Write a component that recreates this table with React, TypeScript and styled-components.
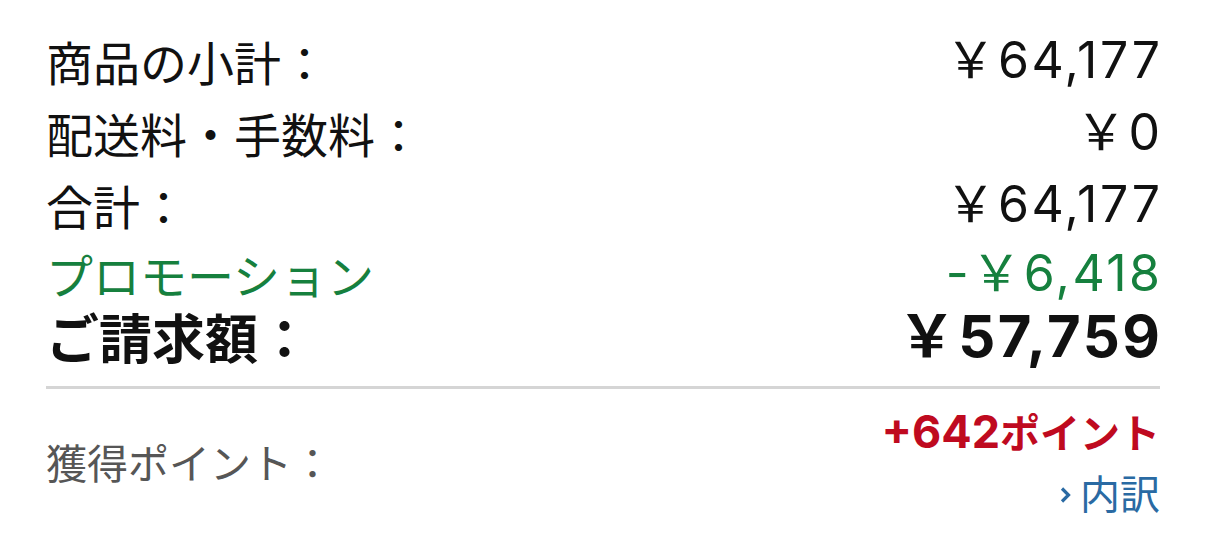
import styled, { createGlobalStyle } from "styled-components";

const GlobalStyle = createGlobalStyle`
  html, body {
    margin: 0;
    padding: 0;
    background: #ffffff;
  }
  body {
    font-family: "Noto Sans CJK JP", "Noto Sans", sans-serif;
    color: #111111;
  }
`;

const Summary = styled.section`
  padding: 24px 46px 0 46px;
  width: 1114px;
`;

const Row = styled.div<{ $height: number }>`
  display: flex;
  justify-content: space-between;
  align-items: center;
  height: ${({ $height }) => $height}px;
`;

const Label = styled.span<{ $color?: string; $bold?: boolean; $size: number }>`
  display: block;
  font-size: ${({ $size }) => $size}px;
  font-weight: ${({ $bold }) => ($bold ? 700 : 400)};
  color: ${({ $color }) => $color || "#111111"};
  line-height: 1;
  white-space: nowrap;
`;

const Amount = styled.span<{ $color?: string; $bold?: boolean; $size: number }>`
  display: block;
  font-family: Inter, "Noto Sans CJK JP", sans-serif;
  font-size: ${({ $size }) => $size}px;
  font-weight: ${({ $bold }) => ($bold ? 700 : 400)};
  letter-spacing: 2.5px;
  margin-right: -2.5px;
  color: ${({ $color }) => $color || "#111111"};
  line-height: 1;
  white-space: nowrap;
`;

const Divider = styled.hr`
  margin: 20px 0 0 0;
  border: none;
  height: 3px;
  background: #d5d5d5;
`;

const PointsBlock = styled.div`
  display: flex;
  justify-content: space-between;
  align-items: center;
  padding-top: 12px;
`;

const PointsLabel = styled.span`
  display: block;
  font-size: 41px;
  color: #565656;
  line-height: 1;
`;

const PointsRight = styled.div`
  display: flex;
  flex-direction: column;
  align-items: flex-end;
`;

const PointsValue = styled.span`
  display: block;
  font-size: 40px;
  font-weight: 700;
  color: #bf0a1f;
  line-height: 60px;

  b {
    font-family: Inter, sans-serif;
    font-size: 45px;
    font-weight: 700;
  }
`;

const BreakdownLink = styled.a`
  font-size: 40px;
  color: #2a6aa3;
  line-height: 60px;
  text-decoration: none;
  display: flex;
  align-items: center;
  gap: 9px;
`;

const Chevron = styled.svg`
  width: 11px;
  height: 22px;
  margin-top: 5px;
`;

const rows = [
  { label: "商品の小計：", amount: "￥64,177" },
  { label: "配送料・手数料：", amount: "￥0" },
  { label: "合計：", amount: "￥64,177" },
];

const App = () => {
  return (
    <>
      <GlobalStyle />
      <Summary>
        {rows.map((r) => (
          <Row key={r.label} $height={72}>
            <Label $size={47}>{r.label}</Label>
            <Amount $size={50}>{r.amount}</Amount>
          </Row>
        ))}
        <Row $height={66}>
          <Label $size={47} $color="#16803e">
            プロモーション
          </Label>
          <Amount $size={50} $color="#16803e">
            -￥6,418
          </Amount>
        </Row>
        <Row $height={60}>
          <Label $size={53} $bold>
            ご請求額：
          </Label>
          <Amount $size={58} $bold>
            ￥57,759
          </Amount>
        </Row>
        <Divider />
        <PointsBlock>
          <PointsLabel>獲得ポイント：</PointsLabel>
          <PointsRight>
            <PointsValue>
              <b>+642</b>ポイント
            </PointsValue>
            <BreakdownLink href="#">
              <Chevron viewBox="0 0 11 22">
                <path d="M2 4.5 L8.5 11 L2 17.5" fill="none" stroke="#2a6aa3" strokeWidth="3.2" />
              </Chevron>
              内訳
            </BreakdownLink>
          </PointsRight>
        </PointsBlock>
      </Summary>
    </>
  );
};

export default App;
